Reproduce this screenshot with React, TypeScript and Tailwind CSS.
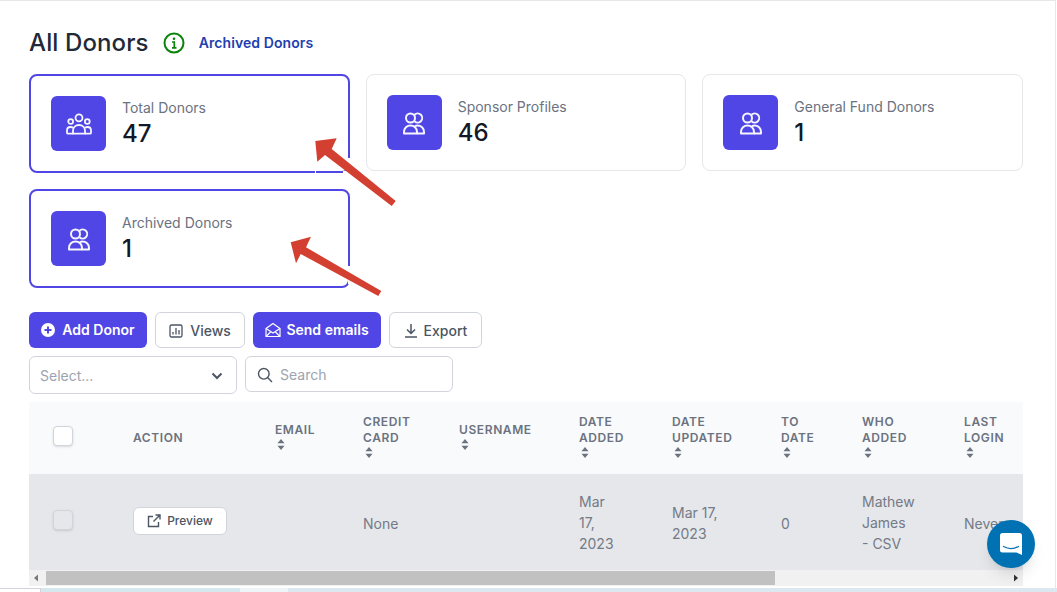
import React from "react";

const UsersTwo = () => (
  <svg width="26" height="26" viewBox="0 0 26 26" fill="none" stroke="#fff" strokeWidth="2" className="opacity-95">
    <circle cx="9.500" cy="8" r="4.500" />
    <path d="M13.500 4.800A4.500 4.500 0 1 1 13.500 11.200" />
    <path d="M3 23.500v-1.500C3 18 6 15.500 9.500 15.500S16 18 16 22v1.500z" strokeLinejoin="round" />
    <path d="M16 23.500h7v-1.500c0-4-3-6.500-6.500-6.500-1 0-1.800.2-2.700.6" strokeLinejoin="round" />
  </svg>
);

const UsersThree = () => (
  <svg width="26" height="26" viewBox="0 0 26 26" fill="none" stroke="#fff" strokeWidth="1.800" className="opacity-95">
    <circle cx="13" cy="6.800" r="3.500" />
    <circle cx="4.700" cy="10.500" r="2.400" />
    <circle cx="21.300" cy="10.500" r="2.400" />
    <path d="M7 22.700v-3c0-3.500 2.500-5.700 6-5.700s6 2.200 6 5.700v3z" strokeLinejoin="round" />
    <path d="M7 22.700H2a1 1 0 0 1-1-1v-2.200c0-2 1.500-3.500 3.500-3.500 1 0 1.800.3 2.700.8" strokeLinejoin="round" />
    <path d="M19 22.700h5a1 1 0 0 0 1-1v-2.200c0-2-1.500-3.500-3.500-3.500-1 0-1.800.3-2.700.8" strokeLinejoin="round" />
  </svg>
);

const Sort = () => (
  <svg width="8" height="11" viewBox="0 0 8 11" className="mt-[1px] ml-[2px] block" fill="#6b7280">
    <path d="M4 0l3.500 4.200H.5z" />
    <path d="M4 11L.5 6.800h7z" />
  </svg>
);

const StatCard = ({ label, value, active, three }: { label: string; value: string; active?: boolean; three?: boolean }) => (
  <div className={active ? "flex items-center gap-4 rounded-lg border-2 border-[#5046e5] bg-white p-5" : "flex items-center gap-4 rounded-lg border border-[#e5e7eb] bg-white p-5"}>
    <div className="flex h-[55px] w-[55px] items-center justify-center rounded-md bg-[#5046e5]">
      {three ? <UsersThree /> : <UsersTwo />}
    </div>
    <div>
      <div className="mb-[2px] text-sm leading-[18px] text-[#6b7280]">{label}</div>
      <div className="text-2xl leading-[30px] font-medium text-[#111827]">{value}</div>
    </div>
  </div>
);

const Th = ({ lines, sort = true }: { lines: string[]; sort?: boolean }) => (
  <th className={sort ? "px-6 pt-0 pb-1 text-left align-middle text-xs leading-4 font-semibold tracking-wider text-[#6b7280] uppercase" : "px-6 py-0 text-left align-middle text-xs leading-4 font-semibold tracking-wider text-[#6b7280] uppercase"}>
    {lines.map((l) => (
      <div key={l}>{l}</div>
    ))}
    {sort && <Sort />}
  </th>
);

const Td = ({ children, nudge }: { children: React.ReactNode; nudge?: boolean }) => (
  <td className={nudge ? "px-6 pt-[2px] pb-0 align-middle text-sm leading-[21px] font-normal text-[#747a86]" : "px-6 py-0 align-middle text-sm leading-[21px] font-normal text-[#747a86]"}>{children}</td>
);

export default function App() {
  return (
    <div className="relative h-[592px] w-[1057px] overflow-hidden bg-white font-['Inter',sans-serif]">
      <div className="h-[588px] w-[1056px] border-t border-r border-[#e5e7eb] pl-[29px] pr-[32px]">
        <div className="flex h-[73px] items-center pt-[11px]">
          <h1 className="text-2xl tracking-[0.005em] font-medium text-[#1f2937]">All Donors</h1>
          <svg width="22" height="22" viewBox="0 0 22 22" fill="none" className="ml-[14px]">
            <circle cx="11" cy="11" r="9.500" stroke="#0a830a" strokeWidth="2" />
            <circle cx="11" cy="6.800" r="1.300" fill="#0a830a" />
            <path d="M9 10h2.300v5.500M9 15.800h4.500" stroke="#0a830a" strokeWidth="1.700" />
          </svg>
          <a className="ml-[14px] text-sm tracking-[0.006em] font-semibold text-[#1e40af]">Archived Donors</a>
        </div>

        <div className="grid grid-cols-3 items-start gap-4">
          <StatCard label="Total Donors" value="47" active three />
          <StatCard label="Sponsor Profiles" value="46" />
          <StatCard label="General Fund Donors" value="1" />
          <StatCard label="Archived Donors" value="1" active />
        </div>

        <div className="mt-6 flex gap-2">
          <button className="flex h-9 w-[118px] items-center justify-center gap-[7px] rounded-md bg-[#5046e5] text-sm font-semibold text-white">
            <svg width="14" height="14" viewBox="0 0 14 14">
              <circle cx="7" cy="7" r="7" fill="#fff" />
              <path d="M7 3.500v7M3.500 7h7" stroke="#5046e5" strokeWidth="2" />
            </svg>
            Add Donor
          </button>
          <button className="flex h-9 w-[90px] items-center justify-center gap-[7px] rounded-md border border-[#d1d5db] bg-white pt-[1px] text-sm font-medium text-[#4b5563]">
            <svg width="14" height="14" viewBox="0 0 14 14" fill="none" stroke="#4b5563" strokeWidth="1.300">
              <rect x="1" y="1" width="12" height="12" rx="1.500" />
              <path d="M4 10.500V8M7 10.500V4M10 10.500V6" />
            </svg>
            Views
          </button>
          <button className="flex h-9 w-[128px] items-center justify-center gap-[5px] rounded-md bg-[#5046e5] text-sm font-semibold text-white">
            <svg width="16" height="16" viewBox="0 0 16 16" fill="none" stroke="#fff" strokeWidth="1.200" strokeLinejoin="round">
              <path d="M1 6.500L8 1.500l7 5V14.500H1z" />
              <path d="M1 6.500l7 4.500 7-4.500M1 14.500l5-5M15 14.500l-5-5" />
            </svg>
            Send emails
          </button>
          <button className="flex h-9 w-[93px] items-center justify-center gap-[6px] rounded-md border border-[#d1d5db] bg-white pt-[1px] text-sm font-medium text-[#4b5563]">
            <svg width="14" height="15" viewBox="0 0 14 15" fill="none" stroke="#4b5563" strokeWidth="1.500">
              <path d="M7 1v9M3 6.500l4 4 4-4M1 14h12" />
            </svg>
            Export
          </button>
        </div>

        <div className="mt-2 flex items-start gap-2">
          <div className="flex h-[38px] w-[208px] items-center justify-between rounded-md border border-[#d1d5db] bg-white pt-[1px] pr-[13px] pl-[10px] text-sm text-[#9ca3af]">
            Select...
            <svg width="12" height="8" viewBox="0 0 12 8" fill="none" stroke="#4b5563" strokeWidth="2">
              <path d="M1.500 1.500L6 6l4.500-4.500" />
            </svg>
          </div>
          <div className="flex h-9 w-[208px] items-center gap-[7px] rounded-md border border-[#d1d5db] bg-white pt-[1px] pl-[11px] text-sm text-[#9ca3af]">
            <svg width="16" height="16" viewBox="0 0 16 16" fill="none" stroke="#4b5563" strokeWidth="1.400">
              <circle cx="6.800" cy="6.800" r="5.300" />
              <path d="M10.800 10.800L15 15" />
            </svg>
            Search
          </div>
        </div>

        <div className="mt-2 w-[994px]">
          <div className="overflow-hidden">
            <table className="w-[1051px] table-fixed border-collapse">
              <colgroup>
                <col className="w-[80px]" />
                <col className="w-[142px]" />
                <col className="w-[88px]" />
                <col className="w-[96px]" />
                <col className="w-[120px]" />
                <col className="w-[93px]" />
                <col className="w-[109px]" />
                <col className="w-[81px]" />
                <col className="w-[102px]" />
                <col className="w-[140px]" />
              </colgroup>
              <thead>
                <tr className="h-[72px] bg-[#f9fafb]">
                  <th className="pb-1 pl-6 align-middle">
                    <div className="h-5 w-5 rounded border border-[#d1d5db] bg-white shadow-sm" />
                  </th>
                  <Th lines={["Action"]} sort={false} />
                  <Th lines={["Email"]} />
                  <Th lines={["Credit", "Card"]} />
                  <Th lines={["Username"]} />
                  <Th lines={["Date", "Added"]} />
                  <Th lines={["Date", "Updated"]} />
                  <Th lines={["To", "Date"]} />
                  <Th lines={["Who", "Added"]} />
                  <Th lines={["Last", "Login"]} />
                </tr>
              </thead>
              <tbody>
                <tr className="h-[96px] bg-[#e5e7eb]">
                  <td className="pb-1 pl-6 align-middle">
                    <div className="h-5 w-5 rounded border border-[#d1d5db] bg-[#e5e7eb] shadow-sm" />
                  </td>
                  <td className="px-6 pb-[2px] align-middle">
                    <button className="flex h-7 w-[94px] items-center justify-center gap-[6px] rounded-md border border-[#d1d5db] bg-white text-xs font-medium text-[#4b5563]">
                      <svg width="14" height="14" viewBox="0 0 14 14" fill="none" stroke="#4b5563" strokeWidth="1.400">
                        <path d="M6 2.500H1.500v10h10V8M8.500 1h4.500v4.500M13 1L6.500 7.500" />
                      </svg>
                      Preview
                    </button>
                  </td>
                  <Td>{""}</Td>
                  <Td nudge>None</Td>
                  <Td>{""}</Td>
                  <Td>Mar 17, 2023</Td>
                  <Td nudge>Mar 17, 2023</Td>
                  <Td nudge>0</Td>
                  <Td>
                    Mathew
                    <br />
                    James
                    <br />- CSV
                  </Td>
                  <Td nudge>Never</Td>
                </tr>
              </tbody>
            </table>
          </div>
          <div className="flex h-4 items-center bg-[#f1f1f1] pr-[3px] pl-[3px]">
            <svg width="8" height="8" viewBox="0 0 8 8" fill="#7a7a7a" className="shrink-0"><path d="M6 0.500v7L2 4z" /></svg>
            <div className="ml-[6px] h-[14px] w-[729px] bg-[#c1c1c1]" />
            <svg width="8" height="8" viewBox="0 0 8 8" fill="#333" className="ml-auto shrink-0"><path d="M2 0.500v7L6 4z" /></svg>
          </div>
        </div>
      </div>

      <div className="flex h-1 w-full">
        <div className="h-full w-[41px] border-t border-r border-[#d1d5db] bg-white" />
        <div className="h-full w-[199px] bg-[#d5e8ee]" />
        <div className="h-full w-[48px] bg-[#eef5f8]" />
        <div className="h-full flex-1 bg-[#dde7f0]" />
      </div>

      {/* Annotation arrows, with the paste-in halo they leave on the card borders */}
      <svg className="absolute top-0 left-0" width="1057" height="592" viewBox="0 0 1057 592">
        <path d="M348 158h3v16h-3zM343 171h6v3h-6zM315 171h1v2h-1zM348 266h3v18h-3z" fill="#fff" />
        <path fill="#d33f30" d="M315.300 141L336.700 138.300 331.700 149 395.700 201 391.700 206 325 155 317.300 161.700z" />
        <path fill="#d33f30" d="M290.700 242.300L311 236.700 306 247.300 381.300 291 378.300 296 300.700 254 296 263.300z" />
      </svg>

      {/* Chat launcher */}
      <div className="absolute top-[520px] left-[987px] flex h-12 w-12 items-center justify-center rounded-full bg-[#0071b2] shadow-lg">
        <svg width="22" height="22" viewBox="0 0 22 22">
          <path d="M2.500 0h17A2.500 2.500 0 0 1 22 2.500V22l-5.500-2.500h-14A2.500 2.500 0 0 1 0 17V2.500A2.500 2.500 0 0 1 2.500 0z" fill="#fff" />
          <path d="M3.500 13.500c4.500 2.500 10.500 2.500 15 0" fill="none" stroke="#0071b2" strokeWidth="1.200" strokeLinecap="round" />
        </svg>
      </div>
    </div>
  );
}
